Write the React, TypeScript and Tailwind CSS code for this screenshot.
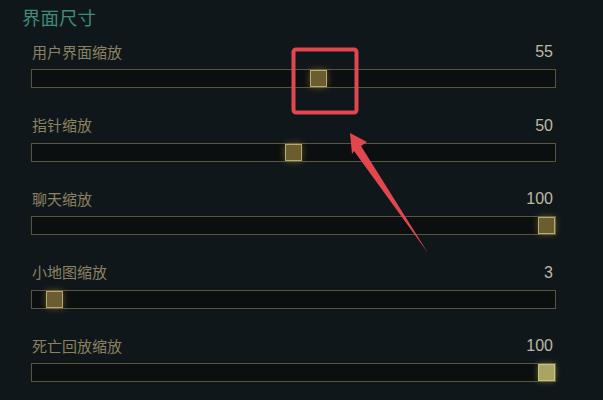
import React from "react";

const rows = [
  { label: "用户界面缩放", value: 55 },
  { label: "指针缩放", value: 50 },
  { label: "聊天缩放", value: 100 },
  { label: "小地图缩放", value: 3 },
  { label: "死亡回放缩放", value: 100, active: true },
];

function Slider({ value, active }: { value: number; active?: boolean }) {
  // track inner width 523, thumb 16
  const left = (value / 100) * 507;
  return (
    <div className="relative h-[19px] border border-[#59563f] bg-[#0b0f0f]">
      <div
        className={
          "absolute top-0 w-[17px] h-[17px] border " +
          (active
            ? "bg-[#a9a462] border-[#c9c47e] shadow-[0_0_6px_rgba(210,200,110,0.45)]"
            : "bg-[#6b5d30] border-[#b6ab6f] shadow-[0_0_7px_rgba(200,165,70,0.45)]")
        }
        style={{ left: left - 1 }}
      />
    </div>
  );
}

export default function App() {
  return (
    <div
      className="relative w-[603px] h-[400px] overflow-hidden bg-[#10171a]"
      style={{ fontFamily: '"Noto Sans CJK SC", "Liberation Sans", sans-serif' }}
    >
      <div className="pl-[22px] h-[41px] leading-[34px] text-[18.5px] text-[#3f8a7c]">界面尺寸</div>

      <div className="pl-[31px] pr-[47px] flex flex-col">
        {rows.map((r) => (
          <div key={r.label} className="mb-[26.5px]">
            <div className="flex justify-between items-center h-[22px] mb-[6px] pl-[1px] pr-[3px]">
              <span className="text-[15px] text-[#8b8262]">{r.label}</span>
              <span
                className="text-[16px] text-[#bdb9a3]"
                style={{ fontFamily: '"Liberation Sans", sans-serif' }}
              >
                {r.value}
              </span>
            </div>
            <Slider value={r.value} active={r.active} />
          </div>
        ))}
      </div>

      {/* annotation */}
      <svg className="absolute inset-0 pointer-events-none" width="603" height="400">
        <rect x="293.5" y="49.5" width="63" height="63" rx="2.5" fill="none" stroke="#e2474f" strokeWidth="4" />
        <polygon
          points="350,133 367,142 361,146 428,253 354,151 352,154"
          fill="#e2474f"
        />
      </svg>
    </div>
  );
}
